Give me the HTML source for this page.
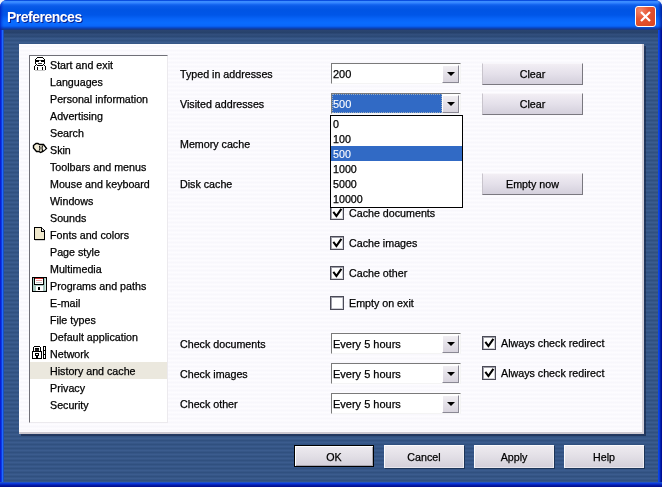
<!DOCTYPE html>
<html><head><meta charset="utf-8">
<style>
*{margin:0;padding:0;box-sizing:border-box}
html,body{width:662px;height:487px;overflow:hidden;background:#eef2fc}
body{position:relative;font-family:"Liberation Sans",sans-serif;font-size:10.7px;color:#000;-webkit-text-stroke:0.25px currentColor}
.abs{position:absolute}
#win{position:absolute;will-change:transform;left:0;top:0;width:662px;height:487px;border-radius:7px 7px 0 0;overflow:hidden;background:#0a40d8}
#tlb{position:absolute;left:0;top:0;width:4px;height:30px;background:linear-gradient(to right,rgba(0,30,190,.8),rgba(0,40,200,.3) 2px,rgba(0,40,200,0))}
#trb{position:absolute;left:658px;top:0;width:4px;height:30px;background:linear-gradient(to right,rgba(0,40,200,0),rgba(0,30,160,.4) 2px,rgba(0,20,140,.8))}
#lb{position:absolute;left:0;top:30px;width:4px;height:457px;background:linear-gradient(to right,#0a1ed0 0,#0a1ed0 1px,#0a3ae8 1px,#0a3ae8 2px,#2068ff 2px,#2068ff 3px,#1a50c0 3px)}
#rb{position:absolute;left:658px;top:30px;width:4px;height:457px;background:linear-gradient(to right,#0a44e8 0,#0a44e8 1px,#0838d8 1px,#0838d8 2px,#0020b0 2px,#0020b0 3px,#000e94 3px)}
#bb{position:absolute;left:0;top:482px;width:662px;height:5px;background:linear-gradient(to bottom,#1e50c8 0,#1e50c8 1px,#0c3ad8 1px,#0c3ad8 2px,#0828c0 2px,#0828c0 3px,#041aa0 3px,#041aa0 4px,#021090 4px)}
#title{position:absolute;left:0;top:0;width:662px;height:30px;
 background:linear-gradient(to bottom,#0a4ee0 0px,#0a4ee0 1px,#3d8fff 1px,#3585ff 3px,#1a6cf5 4px,#0a5ae8 6px,#0054e4 10px,#0056e8 15px,#0864f8 19px,#0a6cff 23px,#0a66fa 26px,#0656e0 27px,#0a44c0 28px,#123c98 29px,#183a80 30px)}
#title .t{-webkit-text-stroke:0;position:absolute;left:7px;top:10px;font-size:14px;line-height:14px;letter-spacing:-0.5px;font-weight:bold;color:#fff;text-shadow:1px 1px 0 #0a1e8c}
#client{position:absolute;left:4px;top:30px;width:654px;height:452px;
 background:repeating-linear-gradient(to bottom,#3b5c8e 0,#3b5c8e 1px,#30507f 2px,#30507f 3px,#3b5c8e 4px)}
#shtop{position:absolute;left:4px;top:30px;width:654px;height:10px;background:linear-gradient(to bottom,rgba(20,36,70,.45),rgba(20,36,70,0))}
#shp{position:absolute;left:21px;top:46px;width:625px;height:390px;background:rgba(16,30,60,.55)}
#panel{position:absolute;left:19px;top:44px;width:625px;height:390px;background:repeating-linear-gradient(to bottom,#fdfcff 0,#fdfcff 1px,#f8f7fc 2px,#f8f7fc 3px,#fdfcff 4px);border-right:2px solid #d4d0d8;border-bottom:2px solid #ccc8d0}
.close{position:absolute;left:635px;top:6px;width:21px;height:21px;border:1px solid #fff;border-radius:3px;
 background:radial-gradient(circle at 22% 18%,#f4886a 0,#e65432 40%,#d8441e 100%)}
.close svg{position:absolute;left:0;top:0}
.btn{position:absolute;height:23px;width:80px;background:linear-gradient(to bottom,#eeebf0,#e2dfe6 50%,#d4d0da);
 border-top:1px solid #fbfafc;border-left:1px solid #fbfafc;border-right:1px solid #f0eef2;border-bottom:1px solid #e8e6ec;text-align:center;line-height:21px;padding-top:1px;box-shadow:1px 1px 0 #1c3458}
.btn.def{height:22px;border:1px solid #000;box-shadow:inset 1px 1px 0 #fff, inset -1px -1px 0 #a8a6b0;line-height:20px}
.lbl{position:absolute;left:180px;white-space:nowrap;height:17px;line-height:17px}
.combo{position:absolute;left:331px;width:130px;height:21px;background:#fff;border-top:1px solid #7a7a7a;border-left:1px solid #7a7a7a;border-right:1px solid #f4f4f4;border-bottom:1px solid #f4f4f4}
.combo .v{position:absolute;left:1px;top:4px;white-space:nowrap;font-size:11px}
.combo .dd{position:absolute;left:110px;top:1px;width:17px;height:18px;background:linear-gradient(to bottom,#f0eef2,#d8d4de);border-right:1px solid #8a8894;border-bottom:1px solid #8a8894;border-left:1px solid #fff;border-top:1px solid #fff}
.combo .dd:after{content:"";position:absolute;left:4px;top:6px;border-left:4px solid transparent;border-right:4px solid transparent;border-top:4px solid #000}
.cb{position:absolute;width:14px;height:14px;background:#fff;border:1px solid #4a4a56;box-shadow:inset 1px 1px 0 #a0a0aa,inset -1px -1px 0 #cfcfd6}
.cb svg{position:absolute;left:-1px;top:-1px}
.cbl{position:absolute;white-space:nowrap;height:17px;line-height:17px}
.li{position:absolute;left:50px;white-space:nowrap;height:17px;line-height:17px;padding-top:1px}
#list{position:absolute;left:29px;top:55px;width:139px;height:368px;background:#fff;border-top:1px solid #707078;border-left:1px solid #707078;border-right:1px solid #eceaee;border-bottom:1px solid #eceaee}
.sel{position:absolute;left:30px;width:137px;height:17px;background:#ebe8de}
.pbtn{position:absolute;width:101px;height:22px;background:linear-gradient(to bottom,#f2eef4,#e4e0ea 50%,#d4d0dc);border-left:1px solid #c8c4cc;border-top:1px solid #f8f6fa;border-right:1px solid #7a7880;border-bottom:1px solid #7a7880;text-align:center;line-height:20px}
.selv{position:absolute;left:0px;top:0px;width:110px;height:19px;background:#316ac5;outline:1px dotted #9ab;outline-offset:-1px}
#ddl{position:absolute;left:330px;top:115px;width:133px;height:93px;background:#fff;border:1px solid #000}
#ddl .o{position:absolute;left:0;width:131px;height:15px;line-height:15px;padding-left:2px;padding-top:1px}
#ddl .o.s{background:#316ac5;color:#fff;-webkit-text-stroke:0.1px #fff}
</style></head><body>
<div id="win">

 <div id="title"><div id="tlb"></div><div id="trb"></div><div class="t">Preferences</div>
  <div class="close"><svg width="19" height="19" viewBox="0 0 19 19"><path d="M5 5 L14 14 M14 5 L5 14" stroke="#fff" stroke-width="2.2"/></svg></div>
 </div>
 <div id="client"></div><div id="shtop"></div><div id="shp"></div>
 <div id="lb"></div><div id="rb"></div><div id="bb"></div>
 <div id="panel"></div>
 <div id="list"></div>
 <div class="sel" style="top:362px"></div>
 <div class="li" style="top:56px">Start and exit</div>
 <div class="li" style="top:73px">Languages</div>
 <div class="li" style="top:90px">Personal information</div>
 <div class="li" style="top:107px">Advertising</div>
 <div class="li" style="top:124px">Search</div>
 <div class="li" style="top:141px">Skin</div>
 <div class="li" style="top:158px">Toolbars and menus</div>
 <div class="li" style="top:175px">Mouse and keyboard</div>
 <div class="li" style="top:192px">Windows</div>
 <div class="li" style="top:209px">Sounds</div>
 <div class="li" style="top:226px">Fonts and colors</div>
 <div class="li" style="top:243px">Page style</div>
 <div class="li" style="top:260px">Multimedia</div>
 <div class="li" style="top:277px">Programs and paths</div>
 <div class="li" style="top:294px">E-mail</div>
 <div class="li" style="top:311px">File types</div>
 <div class="li" style="top:328px">Default application</div>
 <div class="li" style="top:345px">Network</div>
 <div class="li" style="top:362px">History and cache</div>
 <div class="li" style="top:379px">Privacy</div>
 <div class="li" style="top:396px">Security</div>


 <svg class="abs" style="left:31px;top:55px" width="18" height="18" viewBox="0 0 18 18" shape-rendering="crispEdges">
  <path d="M6 3h6v1h1v6h-1v1h1v1h1v3h-11v-3h1v-1h1v-1h-1v-6h1z" fill="#fff"/>
  <g fill="#000">
   <rect x="6" y="2" width="6" height="1"/><rect x="5" y="3" width="1" height="1"/><rect x="12" y="3" width="1" height="1"/>
   <rect x="4" y="4" width="1" height="5"/><rect x="13" y="4" width="1" height="5"/>
   <rect x="5" y="5" width="3" height="2"/><rect x="10" y="5" width="3" height="2"/>
   <rect x="8" y="8" width="2" height="1"/><rect x="7" y="8" width="4" height="1" fill="#333"/>
   <rect x="5" y="9" width="1" height="1"/><rect x="12" y="9" width="1" height="1"/>
   <rect x="6" y="10" width="6" height="1"/>
   <rect x="4" y="10" width="1" height="1"/><rect x="13" y="10" width="1" height="1"/>
   <rect x="3" y="11" width="1" height="4"/><rect x="14" y="11" width="1" height="4"/>
   <rect x="6" y="12" width="1" height="3"/><rect x="11" y="12" width="1" height="3"/>
  </g>
  <rect x="8" y="5" width="2" height="1" fill="#666"/>
  <rect x="4" y="15" width="10" height="1" fill="#c8c8c8"/>
 </svg>
 <svg class="abs" style="left:31px;top:140px" width="18" height="18" viewBox="0 0 18 18">
  <path d="M8.5 4.5 L12.5 4.5 L15.5 8.5 L12 11.5 L9.5 12.5 L8 11.5 L5.5 11.5 L2.5 8 L2.5 5.5 L5 3.5 L7 3.5 Z" fill="#f2ecd6" stroke="#000" stroke-width="1.4"/>
  <path d="M8.5 6 L9 8 L8.5 10.5 M11.5 5.5 L11 8 L11.5 11" stroke="#000" stroke-width="1.1" fill="none"/>
  <path d="M12.5 6 L14.5 8.5 L12.5 10.5 Z" fill="#fff"/>
 </svg>
 <svg class="abs" style="left:31px;top:225px" width="18" height="18" viewBox="0 0 18 18" shape-rendering="crispEdges">
  <path d="M3 2h7l4 4v9h-11z" fill="#000"/>
  <path d="M4 3h6v4h3v7h-9z" fill="#efe8cc"/>
  <path d="M11 3l2 3h-2z" fill="#fff" shape-rendering="auto"/>
  <rect x="4" y="15" width="10" height="1" fill="#d0d0d0"/>
 </svg>
 <svg class="abs" style="left:31px;top:276px" width="18" height="18" viewBox="0 0 18 18" shape-rendering="crispEdges">
  <rect x="1" y="1" width="15" height="15" fill="#000"/>
  <rect x="2" y="2" width="13" height="13" fill="#a8c8c0"/>
  <rect x="3" y="2" width="10" height="7" fill="#000"/>
  <rect x="4" y="2" width="8" height="6" fill="#fff"/>
  <rect x="4" y="2" width="8" height="1" fill="#c83030"/>
  <rect x="5" y="4" width="6" height="1" fill="#e8a0a0"/>
  <rect x="5" y="6" width="6" height="1" fill="#c0c8c8"/>
  <rect x="5" y="10" width="7" height="5" fill="#fff"/>
  <rect x="7" y="11" width="2" height="3" fill="#000"/>
  <rect x="14" y="3" width="1" height="11" fill="#d8ece8"/>
 </svg>
 <svg class="abs" style="left:31px;top:344px" width="18" height="18" viewBox="0 0 18 18" shape-rendering="crispEdges">
  <path d="M3 2h6v1h1v4h1v8h-10v-8h1v-4h1z" fill="#000"/>
  <rect x="3" y="3" width="6" height="1" fill="#fff"/>
  <rect x="3" y="4" width="1" height="3" fill="#fff"/><rect x="8" y="4" width="1" height="3" fill="#fff"/>
  <rect x="4" y="5" width="4" height="2" fill="#222"/>
  <rect x="2" y="8" width="8" height="6" fill="#fff"/>
  <rect x="4" y="9" width="4" height="3" fill="#000"/>
  <rect x="5" y="12" width="2" height="2" fill="#000"/>
  <rect x="5" y="10" width="2" height="1" fill="#fff"/>
  <rect x="12" y="2" width="3" height="13" fill="#000"/>
  <rect x="13" y="3" width="1" height="3" fill="#fff"/><rect x="13" y="7" width="1" height="3" fill="#fff"/><rect x="13" y="11" width="1" height="3" fill="#fff"/>
 </svg>
 <div class="lbl" style="top:66px">Typed in addresses</div>
 <div class="lbl" style="top:96px">Visited addresses</div>
 <div class="lbl" style="top:136px">Memory cache</div>
 <div class="lbl" style="top:176px">Disk cache</div>
 <div class="lbl" style="top:336px">Check documents</div>
 <div class="lbl" style="top:366px">Check images</div>
 <div class="lbl" style="top:396px">Check other</div>

 <div class="combo" style="top:63px"><div class="v">200</div><div class="dd"></div></div>
 <div class="combo" style="top:93px"><div class="selv"></div><div class="v" style="color:#fff;-webkit-text-stroke:0.1px #fff">500</div><div class="dd"></div></div>
 <div class="combo" style="top:333px"><div class="v">Every 5 hours</div><div class="dd"></div></div>
 <div class="combo" style="top:363px"><div class="v">Every 5 hours</div><div class="dd"></div></div>
 <div class="combo" style="top:393px"><div class="v">Every 5 hours</div><div class="dd"></div></div>

 <div class="pbtn" style="left:482px;top:63px">Clear</div>
 <div class="pbtn" style="left:482px;top:93px">Clear</div>
 <div class="pbtn" style="left:482px;top:173px">Empty now</div>
 <div class="cb" style="left:330px;top:206px"><svg width="14" height="14" viewBox="0 0 14 14"><path d="M4 6.8 L6.4 10 L10.8 3.8" stroke="#000" stroke-width="2.1" fill="none" stroke-linecap="square"/></svg></div><div class="cbl" style="left:349px;top:205px">Cache documents</div>
 <div class="cb" style="left:330px;top:236px"><svg width="14" height="14" viewBox="0 0 14 14"><path d="M4 6.8 L6.4 10 L10.8 3.8" stroke="#000" stroke-width="2.1" fill="none" stroke-linecap="square"/></svg></div><div class="cbl" style="left:349px;top:235px">Cache images</div>
 <div class="cb" style="left:330px;top:266px"><svg width="14" height="14" viewBox="0 0 14 14"><path d="M4 6.8 L6.4 10 L10.8 3.8" stroke="#000" stroke-width="2.1" fill="none" stroke-linecap="square"/></svg></div><div class="cbl" style="left:349px;top:265px">Cache other</div>
 <div class="cb" style="left:330px;top:296px"></div><div class="cbl" style="left:349px;top:295px">Empty on exit</div>
 <div class="cb" style="left:482px;top:336px"><svg width="14" height="14" viewBox="0 0 14 14"><path d="M4 6.8 L6.4 10 L10.8 3.8" stroke="#000" stroke-width="2.1" fill="none" stroke-linecap="square"/></svg></div><div class="cbl" style="left:501px;top:335px">Always check redirect</div>
 <div class="cb" style="left:482px;top:366px"><svg width="14" height="14" viewBox="0 0 14 14"><path d="M4 6.8 L6.4 10 L10.8 3.8" stroke="#000" stroke-width="2.1" fill="none" stroke-linecap="square"/></svg></div><div class="cbl" style="left:501px;top:365px">Always check redirect</div>

 <div id="ddl">
  <div class="o" style="top:0px">0</div>
  <div class="o" style="top:15px">100</div>
  <div class="o s" style="top:30px">500</div>
  <div class="o" style="top:45px">1000</div>
  <div class="o" style="top:60px">5000</div>
  <div class="o" style="top:75px">10000</div>
 </div>

 <div class="btn def" style="left:294px;top:445px">OK</div>
 <div class="btn" style="left:384px;top:445px">Cancel</div>
 <div class="btn" style="left:474px;top:445px">Apply</div>
 <div class="btn" style="left:564px;top:445px">Help</div>

</div>
</body></html>
